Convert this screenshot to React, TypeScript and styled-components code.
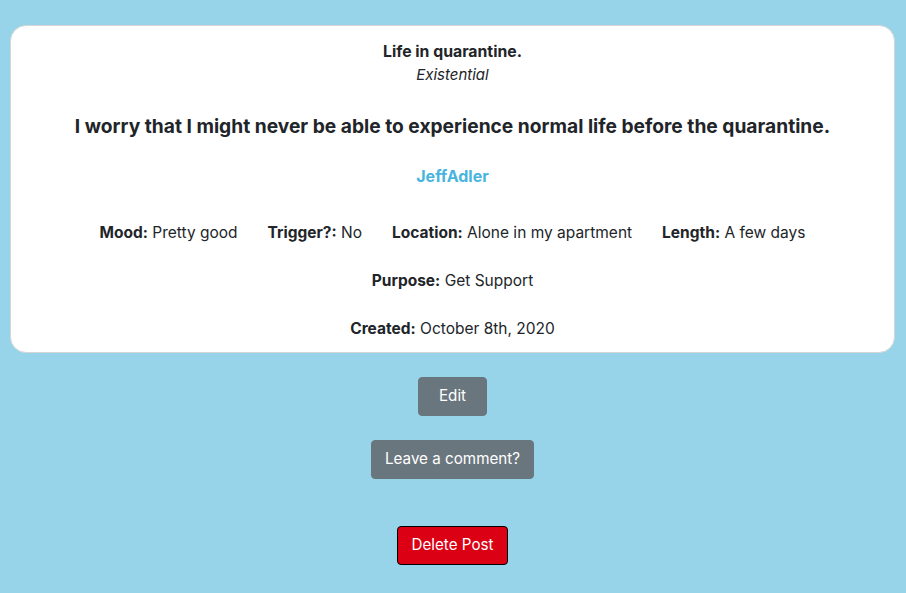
import React from "react";
import styled, { createGlobalStyle } from "styled-components";

const Global = createGlobalStyle`
  html, body { margin: 0; padding: 0; }
  body {
    background: #97d4e9;
    font-family: Inter, "Noto Sans", sans-serif;
    color: #212529;
    font-size: 16px;
    line-height: 24px;
  }
`;

const Page = styled.div`
  padding: 25px 11px 30px 10px;
  display: flex;
  flex-direction: column;
  align-items: center;
`;

const Card = styled.div`
  box-sizing: border-box;
  width: 100%;
  background: #fff;
  border: 1px solid #d6d6d6;
  border-radius: 16px;
  padding: 14px 16px 11px;
  text-align: center;
`;

const Title = styled.div`
  font-weight: 700;
  font-size: 15.8px;
`;

const Category = styled.div`
  font-style: italic;
  font-size: 15px;
  margin-top: -1px;
`;

const Quote = styled.h2`
  font-size: 19.2px;
  font-weight: 700;
  margin: 26px 0 0;
  line-height: 26px;
`;

const Author = styled.div`
  color: #48b5de;
  font-weight: 700;
  margin-top: 25px;
`;

const Row = styled.div<{ $top: number }>`
  display: flex;
  justify-content: center;
  gap: 30px;
  margin-top: ${(p) => p.$top}px;
`;

const Field = styled.span`
  font-size: 15.5px;
`;

const Label = styled.b`
  font-weight: 700;
`;

const Button = styled.button<{ $danger?: boolean; $top: number; $pad: number }>`
  font-family: Inter, "Noto Sans", sans-serif;
  font-size: 15.2px;
  line-height: 24px;
  color: #fff;
  padding: 6px ${(p) => p.$pad}px 7px;
  margin-top: ${(p) => p.$top}px;
  border-radius: 4px;
  background: ${(p) => (p.$danger ? "#dc0014" : "#6a767e")};
  border: 1px solid ${(p) => (p.$danger ? "#000" : "#6a767e")};
  cursor: pointer;
`;

export default function App() {
  return (
    <>
      <Global />
      <Page>
        <Card>
          <Title>Life in quarantine.</Title>
          <Category>Existential</Category>
          <Quote>
            I worry that I might never be able to experience normal life before
            the quarantine.
          </Quote>
          <Author>JeffAdler</Author>
          <Row $top={33}>
            <Field>
              <Label>Mood:</Label> Pretty good
            </Field>
            <Field>
              <Label>Trigger?:</Label> No
            </Field>
            <Field>
              <Label>Location:</Label> Alone in my apartment
            </Field>
            <Field>
              <Label>Length:</Label> A few days
            </Field>
          </Row>
          <Row $top={24}>
            <Field>
              <Label>Purpose:</Label> Get Support
            </Field>
          </Row>
          <Row $top={24}>
            <Field>
              <Label>Created:</Label> October 8th, 2020
            </Field>
          </Row>
        </Card>
        <Button $top={24} $pad={20}>
          Edit
        </Button>
        <Button $top={24} $pad={13}>
          Leave a comment?
        </Button>
        <Button $top={47} $pad={13} $danger>
          Delete Post
        </Button>
      </Page>
    </>
  );
}
